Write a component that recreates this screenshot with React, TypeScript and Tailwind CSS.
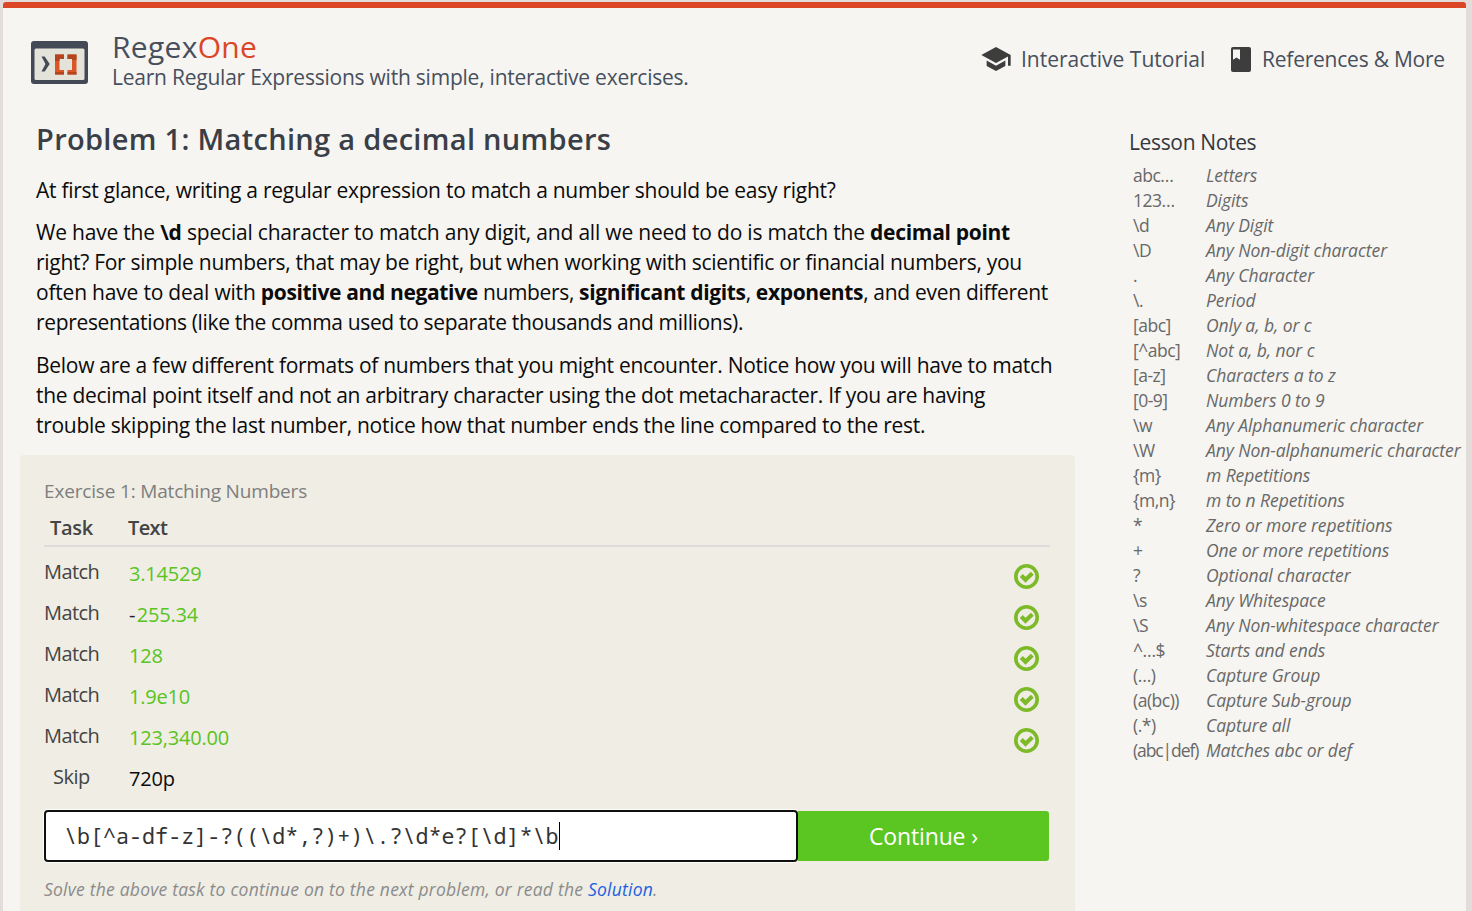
import { Fragment } from "react";

const notes: [string, string][] = [
  ["abc…", "Letters"],
  ["123…", "Digits"],
  ["\\d", "Any Digit"],
  ["\\D", "Any Non-digit character"],
  [".", "Any Character"],
  ["\\.", "Period"],
  ["[abc]", "Only a, b, or c"],
  ["[^abc]", "Not a, b, nor c"],
  ["[a-z]", "Characters a to z"],
  ["[0-9]", "Numbers 0 to 9"],
  ["\\w", "Any Alphanumeric character"],
  ["\\W", "Any Non-alphanumeric character"],
  ["{m}", "m Repetitions"],
  ["{m,n}", "m to n Repetitions"],
  ["*", "Zero or more repetitions"],
  ["+", "One or more repetitions"],
  ["?", "Optional character"],
  ["\\s", "Any Whitespace"],
  ["\\S", "Any Non-whitespace character"],
  ["^…$", "Starts and ends"],
  ["(…)", "Capture Group"],
  ["(a(bc))", "Capture Sub-group"],
  ["(.*)", "Capture all"],
  ["(abc|def)", "Matches abc or def"],
];

const tasks = [
  { task: "Match", prefix: "", text: "3.14529" },
  { task: "Match", prefix: "-", text: "255.34" },
  { task: "Match", prefix: "", text: "128" },
  { task: "Match", prefix: "", text: "1.9e10" },
  { task: "Match", prefix: "", text: "123,340.00" },
];

function Logo() {
  return (
    <svg width="57" height="43" viewBox="0 0 57 43" className="shrink-0">
      <rect width="57" height="43" rx="3" fill="#434955" />
      <rect x="3.5" y="7.5" width="50" height="31.5" rx="1.5" fill="#e4e3da" />
      <path d="M10.500 15.500h3.200l5 7.500-5 7.500h-3.200l4-7.500z" fill="#434955" />
      <path d="M24 13.500h9v4.500h-4.500v11H33v4.500h-9z" fill="#da5626" />
      <path d="M45.500 13.500h-9V18H41v11h-4.500v4.500h9z" fill="#da5626" />
      <path d="M24 13.500h9V18h-4.500v2H24zM24 31h9v2.500h-9zM45.500 13.500h-9V18H41v1h4.500zM36.500 31h9v2.500h-9z" fill="#b2451d" />
    </svg>
  );
}

function School() {
  return (
    <svg width="32" height="32" viewBox="0 0 24 24" fill="#3d3d3d" className="shrink-0">
      <path d="M5 13.180v4L12 21l7-3.820v-4L12 17l-7-3.820zM12 3L1 9l11 6 9-4.910V17h2V9L12 3z" />
    </svg>
  );
}

function Book() {
  return (
    <svg width="20" height="25" viewBox="0 0 20 25" className="shrink-0">
      <rect width="20" height="25" rx="2" fill="#3d3d3d" />
      <path d="M2 2.500h7v10.200l-3.500-2.200L2 12.700z" fill="#f6f5f1" />
    </svg>
  );
}

function Check() {
  return (
    <svg width="25" height="25" viewBox="0 0 25 25" className="shrink-0">
      <circle cx="12.500" cy="12.500" r="10.700" fill="none" stroke="#7dba28" strokeWidth="3.600" />
      <path d="M7.300 11.500l4.200 4.300 6.800-6.500" fill="none" stroke="#7dba28" strokeWidth="4.200" />
    </svg>
  );
}

export default function App() {
  return (
    <div className="h-[911px] w-[1472px] overflow-hidden bg-[#e2dddb] pt-[2px] pr-[6px] pl-[3px] font-['Open_Sans',sans-serif]">
      <div className="h-full rounded-t-[3px] border-t-6 border-[#da4626] bg-[#f6f5f1]">
        <header className="flex h-[102px] pr-[19px] pl-[28px] whitespace-nowrap text-[#474f5d]">
          <div className="pt-[33px]">
            <Logo />
          </div>
          <div className="ml-[24px] pt-[19px]">
            <div className="h-[38px] text-[30px] leading-[39px] font-medium tracking-[0.300px]">
              Regex<span className="text-[#da4626]">One</span>
            </div>
            <div className="text-[21px] leading-[25px] tracking-[-0.230px]">
              Learn Regular Expressions with simple, interactive exercises.
            </div>
          </div>
          <nav className="ml-auto flex h-[102px] items-start pt-[35px] text-[21px] leading-[32px]">
            <School />
            <span className="ml-[9px] w-[186px] tracking-[0px]">Interactive Tutorial</span>
            <span className="ml-[24px] pt-[4px]">
              <Book />
            </span>
            <span className="ml-[11px] w-[185px] tracking-[-0.230px]">References &amp; More</span>
          </nav>
        </header>

        <div className="flex whitespace-nowrap">
          <main className="ml-[17px] w-[1055px] shrink-0 text-[21px] leading-[30px] text-[#0b0b0b]">
            <div className="h-[345px] pl-[16px]">
              <h1 className="h-[49px] pt-[9px] text-[29px] leading-[39px] font-semibold tracking-[0.310px] text-[#3a3f47]">
                Problem 1: Matching a decimal numbers
              </h1>
              <p className="mt-[16px] tracking-[-0.260px]">
                At first glance, writing a regular expression to match a number should be easy right?
              </p>
              <p className="mt-[12px] tracking-[-0.280px]">
                <span className="tracking-[-0.200px]">
                  We have the <b>\d</b> special character to match any digit, and all we need to do is match the{" "}
                  <b className="tracking-[-0.300px]">decimal point</b>
                </span>
                <br />
                right? For simple numbers, that may be right, but when working with scientific or financial numbers, you
                <br />
                <span className="tracking-[-0.350px]">
                  <span className="tracking-[-0.200px]">often have to deal with </span>
                  <b>positive and negative</b> numbers, <b>significant digits</b>, <b>exponents</b>,
                  <span className="tracking-[-0.300px]"> and even different</span>
                </span>
                <br />
                <span className="tracking-[-0.340px]">
                  representations (like the comma used to separate thousands and millions).
                </span>
              </p>
              <p className="mt-[13px] tracking-[-0.290px]">
                Below are a few different formats of numbers that you might encounter. Notice how you will have to match
                <br />
                the decimal point itself and not an arbitrary character using the dot metacharacter. If you are having
                <br />
                trouble skipping the last number, notice how that number ends the line compared to the rest.
              </p>
            </div>

            <section className="h-[470px] rounded-t-[4px] bg-[#efede4] pt-[21px] pr-[25px] pl-[24px]">
              <h2 className="text-[19px] leading-[30px] tracking-[-0.170px] text-[#7e7e7e]">Exercise 1: Matching Numbers</h2>
              <div className="flex h-[41px] border-b-2 border-[#dcdcdc] pt-[7px] pl-[6px] text-[20px] leading-[30px] font-semibold tracking-[-0.600px] text-[#444]">
                <span className="w-[78px] tracking-[-0.300px]">Task</span>
                <span>Text</span>
              </div>
              <div className="pt-[6px]">
                {tasks.map((t) => (
                  <div key={t.text} className="flex h-[41px]">
                    <span className="w-[85px] pt-[3px] text-[20px] leading-[31px] tracking-[-0.550px] text-[#444]">{t.task}</span>
                    <span className="flex-1 pt-[6px] text-[20px] leading-[30px] tracking-[-0.200px] text-[#59c422]">
                      {t.prefix && <span className="tracking-[1.300px] text-[#222]">{t.prefix}</span>}
                      {t.text}
                    </span>
                    <span className="pt-[11px] pr-[11px]">
                      <Check />
                    </span>
                  </div>
                ))}
                <div className="flex h-[41px]">
                  <span className="w-[85px] pt-[3px] pl-[9px] text-[20px] leading-[31px] tracking-[-0.500px] text-[#444]">Skip</span>
                  <span className="pt-[6px] text-[20px] leading-[30px] tracking-[-0.150px]">720p</span>
                </div>
              </div>
              <div className="mt-[11px] flex h-[52px] items-start pr-px">
                <div className="flex h-[52px] w-[754px] items-center rounded-[4px] border-2 border-[#101010] bg-white pl-[18px] font-['Noto_Sans_Mono','DejaVu_Sans_Mono',monospace] text-[21.600px] tracking-[0.060px] text-[#333] ring-1 ring-white">
                  {"\\b[^a-df-z]-?((\\d*,?)+)\\.?\\d*e?[\\d]*\\b"}
                  <span className="h-[28px] w-px bg-black" />
                </div>
                <div className="mt-[1px] h-[50px] flex-1 rounded-r-[3px] bg-[#5bc522] text-center text-[23px] leading-[51px] tracking-[-0.150px] text-white">
                  Continue ›
                </div>
              </div>
              <p className="mt-[12px] text-[17.500px] leading-[30px] tracking-[0.220px] text-[#8b8b8b] italic">
                Solve the above task to continue on to the next problem, or read the{" "}
                <span className="text-[#1d62e0]">Solution</span>.
              </p>
            </section>
          </main>

          <aside className="ml-[54px] text-[17.500px] leading-[25px] text-[#686868]">
            <h3 className="pt-[17px] text-[21px] leading-[31px] tracking-[-0.350px] text-[#33383f]">Lesson Notes</h3>
            <div className="grid grid-cols-[73px_1fr] pt-[5px] pl-[4px]">
              {notes.map(([token, meaning]) => (
                <Fragment key={token}>
                  <span className={token.length > 8 ? "tracking-[-1.100px]" : "tracking-[-0.500px]"}>{token}</span>
                  <i className="tracking-[-0.070px]">{meaning}</i>
                </Fragment>
              ))}
            </div>
          </aside>
        </div>
      </div>
    </div>
  );
}
